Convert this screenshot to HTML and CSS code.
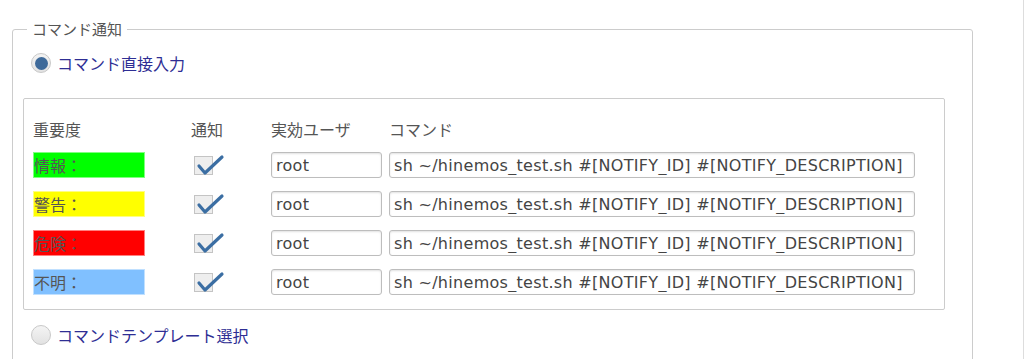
FILE: index.html
```html
<!DOCTYPE html>
<html lang="ja">
<head>
    <meta charset="UTF-8">
    <title>コマンド通知</title>
    <link rel="stylesheet" href="styles.css">
</head>
<body>
    <div class="page">
        <fieldset class="notify-box">
            <legend>コマンド通知</legend>

            <div class="radio-row">
                <span class="radio checked"></span>
                <span class="radio-label">コマンド直接入力</span>
            </div>

            <div class="command-table">
                <div class="head">重要度</div>
                <div class="head">通知</div>
                <div class="head">実効ユーザ</div>
                <div class="head">コマンド</div>

                <div class="level info">情報：</div>
                <div class="check-cell"><span class="check"><svg width="30" height="24" viewBox="0 0 30 24"><path d="M4 12 L10 19 L27 3" fill="none" stroke="#3b6ea3" stroke-width="3.2" stroke-linecap="round" stroke-linejoin="round"/></svg></span></div>
                <input class="field user" value="root">
                <input class="field cmd" value="sh ~/hinemos_test.sh #[NOTIFY_ID] #[NOTIFY_DESCRIPTION]">

                <div class="level warning">警告：</div>
                <div class="check-cell"><span class="check"><svg width="30" height="24" viewBox="0 0 30 24"><path d="M4 12 L10 19 L27 3" fill="none" stroke="#3b6ea3" stroke-width="3.2" stroke-linecap="round" stroke-linejoin="round"/></svg></span></div>
                <input class="field user" value="root">
                <input class="field cmd" value="sh ~/hinemos_test.sh #[NOTIFY_ID] #[NOTIFY_DESCRIPTION]">

                <div class="level critical">危険：</div>
                <div class="check-cell"><span class="check"><svg width="30" height="24" viewBox="0 0 30 24"><path d="M4 12 L10 19 L27 3" fill="none" stroke="#3b6ea3" stroke-width="3.2" stroke-linecap="round" stroke-linejoin="round"/></svg></span></div>
                <input class="field user" value="root">
                <input class="field cmd" value="sh ~/hinemos_test.sh #[NOTIFY_ID] #[NOTIFY_DESCRIPTION]">

                <div class="level unknown">不明：</div>
                <div class="check-cell"><span class="check"><svg width="30" height="24" viewBox="0 0 30 24"><path d="M4 12 L10 19 L27 3" fill="none" stroke="#3b6ea3" stroke-width="3.2" stroke-linecap="round" stroke-linejoin="round"/></svg></span></div>
                <input class="field user" value="root">
                <input class="field cmd" value="sh ~/hinemos_test.sh #[NOTIFY_ID] #[NOTIFY_DESCRIPTION]">
            </div>

            <div class="radio-row template">
                <span class="radio"></span>
                <span class="radio-label">コマンドテンプレート選択</span>
            </div>
        </fieldset>
    </div>
</body>
</html>
```

FILE: styles.css
```css
body {
    margin: 0;
    font-family: "Noto Sans CJK JP", "DejaVu Sans", sans-serif;
    color: #555;
    background: #fff;
}

.page {
    height: 359px;
    padding: 19px 0 0 12px;
    box-sizing: border-box;
    border-right: 1px solid #ddd;
    overflow: hidden;
}

.notify-box {
    width: 961px;
    box-sizing: border-box;
    margin: 0;
    padding: 0 27px 30px 10px;
    border: 1px solid #ccc;
    border-radius: 3px;
}

.notify-box legend {
    margin-left: 4px;
    padding: 0 5px;
    font-size: 15px;
    line-height: 20px;
    color: #555;
}

.radio-row {
    display: flex;
    align-items: center;
    gap: 6px;
    height: 20px;
    margin: 14px 0 0 8px;
}

.radio-row.template {
    margin-top: 15px;
}

.radio {
    width: 18px;
    height: 18px;
    border: 1px solid #c8c8c8;
    border-radius: 50%;
    background: linear-gradient(#f4f4f4, #e2e2e2);
    display: flex;
    align-items: center;
    justify-content: center;
}

.radio.checked::after {
    content: "";
    width: 13px;
    height: 13px;
    border-radius: 50%;
    background: #3e6a9a;
}

.radio-label {
    font-size: 16px;
    color: #2e2e94;
}

.command-table {
    margin-top: 25px;
    border: 1px solid #ccc;
    border-radius: 2px;
    padding: 19px 0 14px 9px;
    display: grid;
    grid-template-columns: 158px 80px 118px 526px;
    grid-template-rows: 21px repeat(4, 26px);
    row-gap: 13px;
    align-items: center;
}

.head {
    font-size: 16px;
    color: #555;
}

.level {
    width: 112px;
    height: 26px;
    box-sizing: border-box;
    border: 1px solid rgba(255, 255, 255, 0.5);
    font-size: 16px;
    line-height: 24px;
    color: #555;
}

.info { background: #00ff00; }
.warning { background: #ffff00; }
.critical { background: #ff0000; }
.unknown { background: #80c0ff; }

.check-cell {
    display: flex;
    align-items: center;
    padding-left: 3px;
}

.check {
    position: relative;
    width: 17px;
    height: 17px;
    border: 1px solid #c4c4c4;
    background: #eee;
}

.check svg {
    position: absolute;
    left: 0;
    top: -3px;
}

.field {
    height: 26px;
    box-sizing: border-box;
    border: 1px solid #bdbdbd;
    border-radius: 3px;
    box-shadow: inset 0 1px 2px rgba(0, 0, 0, 0.12);
    padding: 0 4px;
    font-family: "DejaVu Sans", sans-serif;
    font-size: 16px;
    letter-spacing: 0.3px;
    color: #444;
    background: #fff;
}

.field.user {
    width: 111px;
}

.field.cmd {
    width: 526px;
}
```
